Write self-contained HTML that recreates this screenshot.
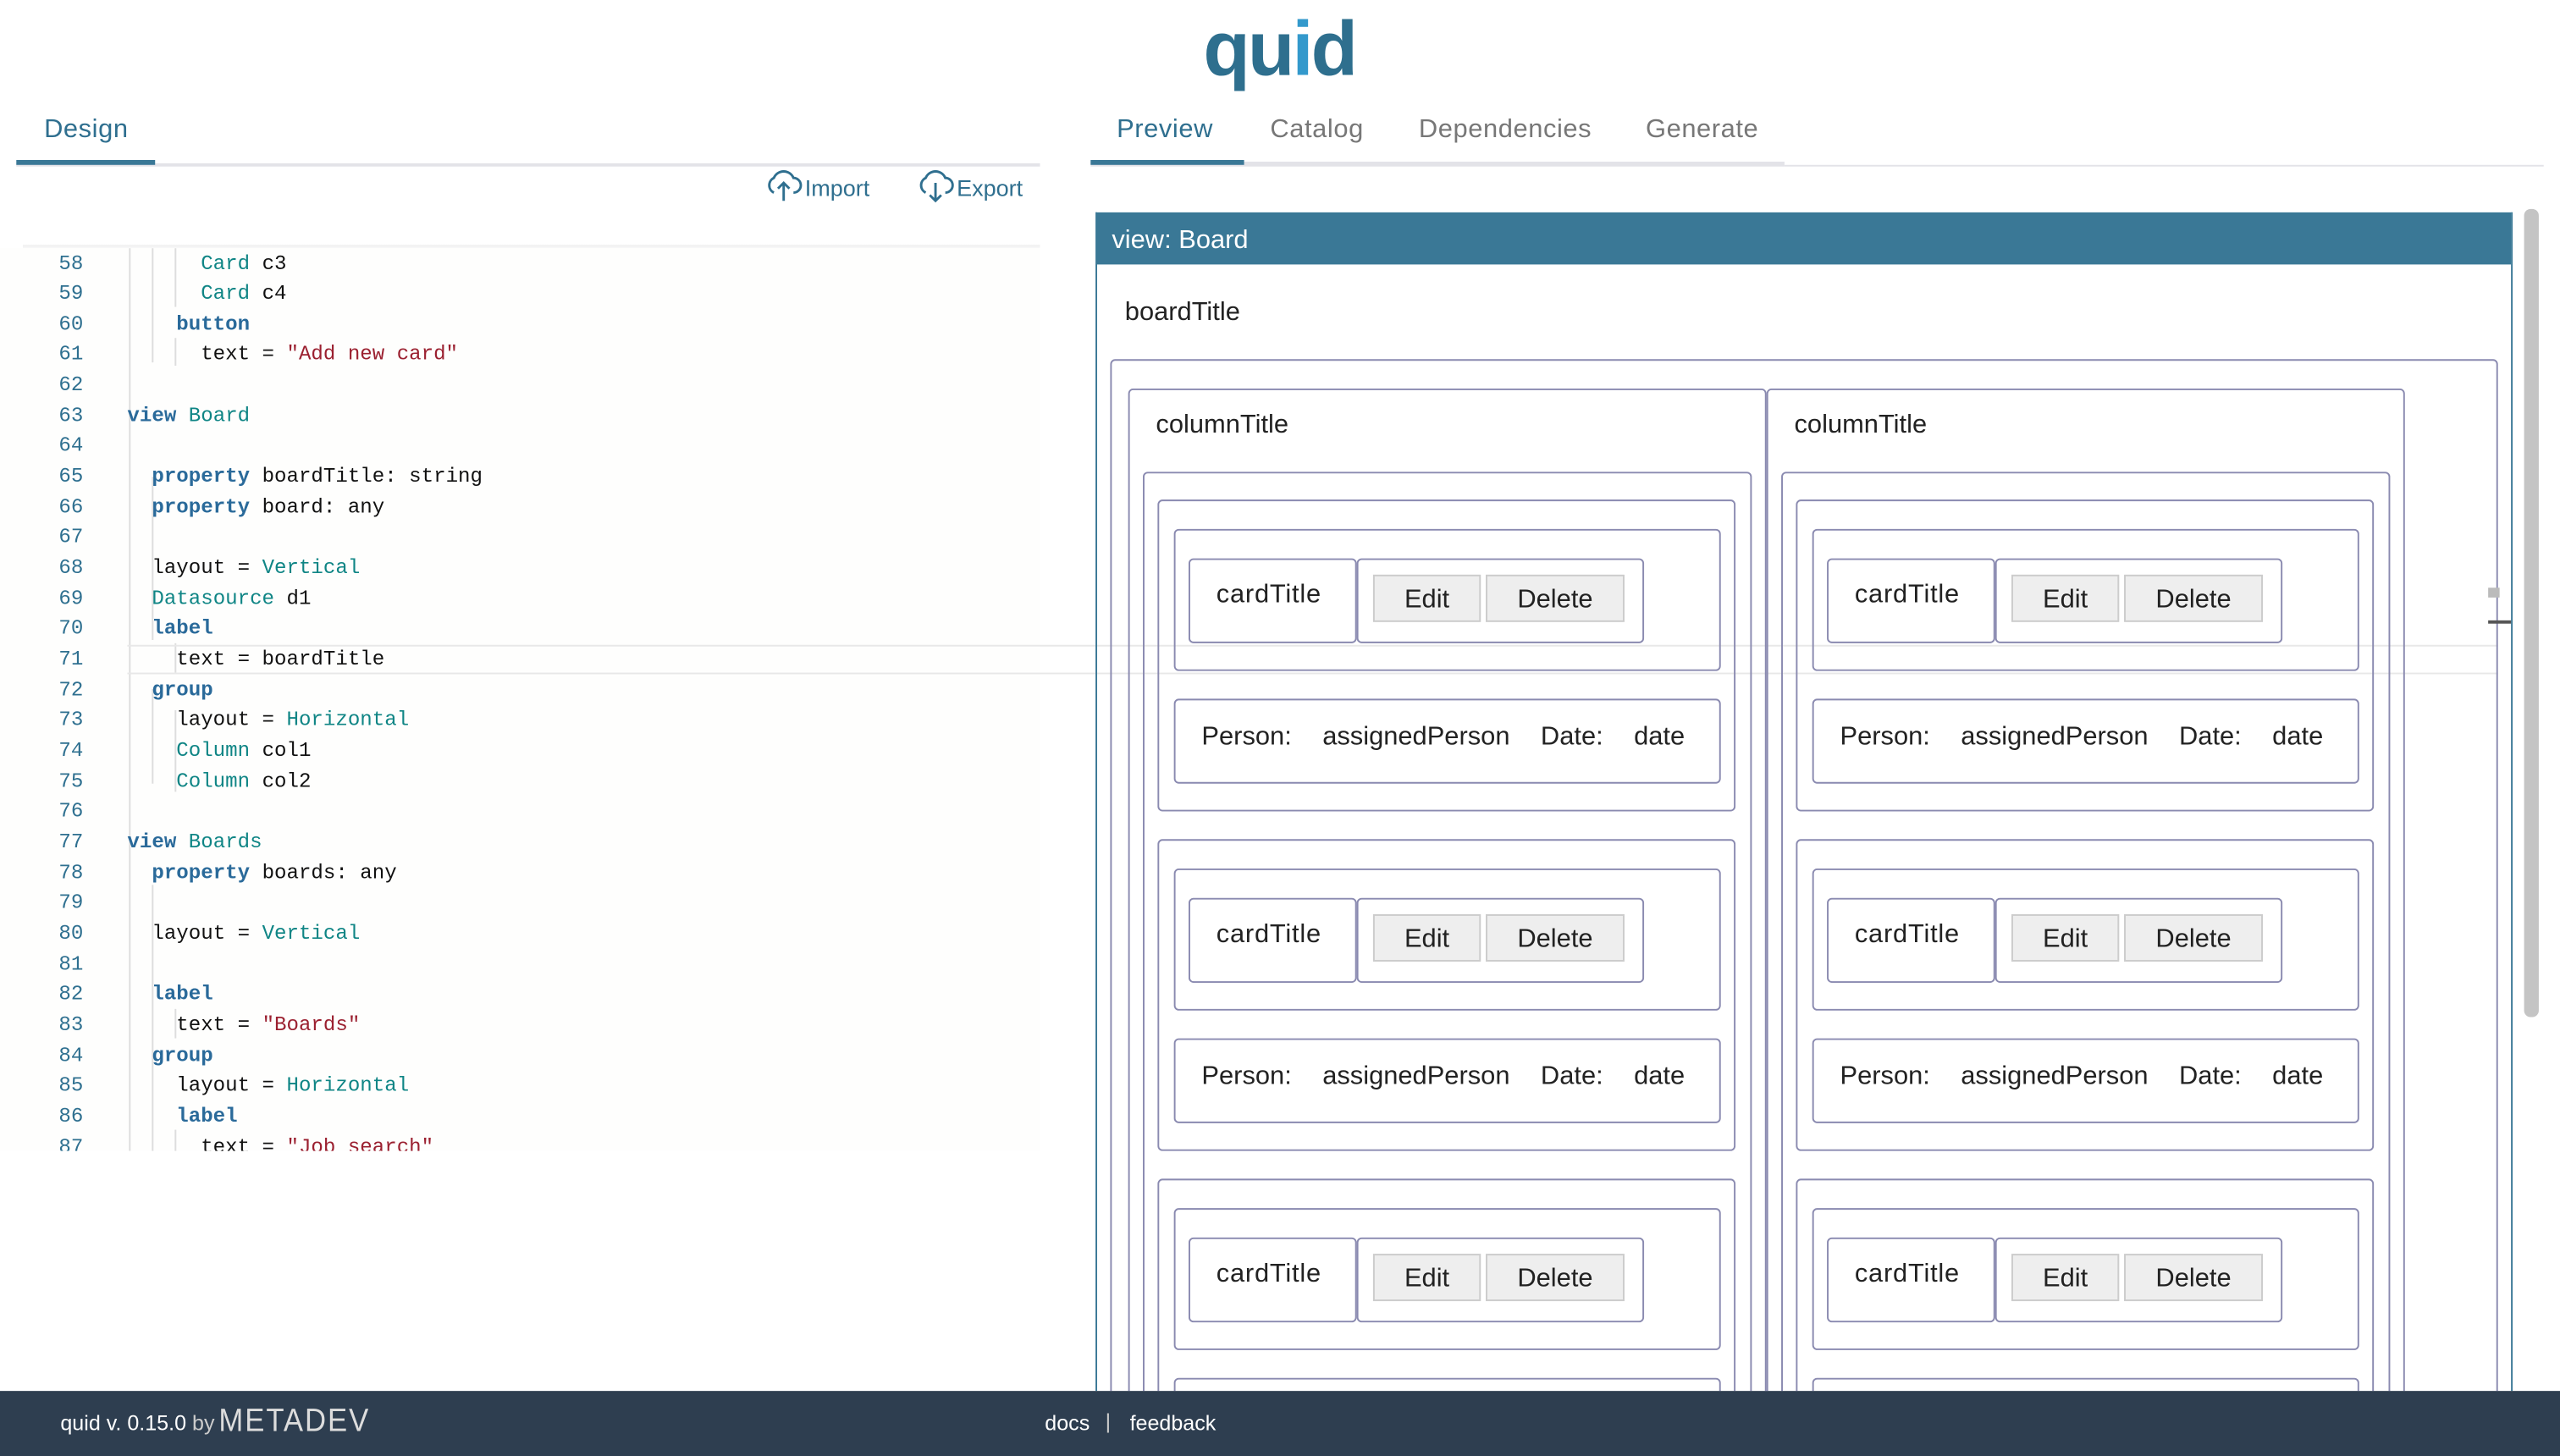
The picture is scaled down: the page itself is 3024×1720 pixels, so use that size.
<!DOCTYPE html>
<html><head><meta charset="utf-8"><style>
html,body{margin:0;padding:0;width:3024px;height:1720px;overflow:hidden;background:#fff}
#w{position:absolute;left:0;top:0;width:1568px;height:892px;overflow:hidden;transform:scale(1.92857);transform-origin:0 0;font-family:"Liberation Sans",sans-serif;color:#222}
.a{position:absolute}
.tab{position:absolute;top:71px;font-size:16px;color:#777;letter-spacing:0.3px}
.code{position:absolute;left:0;top:152px;width:637px;height:553px;overflow:hidden;font-family:"Liberation Mono",monospace;font-size:12.5px;background:#fefefd}
.ln{position:absolute;left:20px;width:31px;text-align:right;color:#2f7090}
.cl{position:absolute;white-space:pre;color:#111}
.k{color:#2a6a9a;font-weight:bold}.t{color:#0f8585}.s{color:#9b2030}
.g{position:absolute;width:1px;background:#ddd}
.b{position:absolute;border:1.3px solid #8a8ab0;border-radius:3px;box-sizing:border-box;background:transparent}
.txt{position:absolute;font-size:16px;color:#222;white-space:pre}
.btn{position:absolute;top:9px;height:29px;background:#eee;border:1px solid #ccc;box-sizing:border-box;font-size:16px;text-align:center;line-height:30px}
</style></head><body><div id="w">
<div class="a" style="left:737px;top:2px;font-size:47px;font-weight:bold;line-height:56px;letter-spacing:-1.5px;color:#2e6f8e">qu<span style="color:#3399cc">i</span>d</div>

<div class="tab" style="left:27px;color:#2f6f8f">Design</div>
<div class="a" style="left:10px;top:100px;width:627px;height:2px;background:#e3e3e8"></div>
<div class="a" style="left:10px;top:98px;width:85px;height:3px;background:#3a7896"></div>
<div class="tab" style="left:684px;color:#2f6f8f">Preview</div>
<div class="tab" style="left:778px">Catalog</div>
<div class="tab" style="left:869px">Dependencies</div>
<div class="tab" style="left:1008px">Generate</div>
<div class="a" style="left:668px;top:99px;width:425px;height:3px;background:#e3e3e8"></div>
<div class="a" style="left:1093px;top:101px;width:465px;height:1px;background:#e3e3e8"></div>
<div class="a" style="left:668px;top:98px;width:94px;height:3px;background:#3a7896"></div>

<svg class="a" style="left:468px;top:103px" width="24" height="22" viewBox="0 0 24 22"><path d="M6 15 A5 5 0 0 1 6 6 A6.5 6.5 0 0 1 18 6 A4.5 4.5 0 0 1 18 15" fill="none" stroke="#2f6f8f" stroke-width="1.5"/><path d="M12 20 V9 M8.5 12.5 L12 9 L15.5 12.5" fill="none" stroke="#2f6f8f" stroke-width="1.5"/></svg>
<div class="a" style="left:493px;top:107px;font-size:14px;color:#2f6f8f">Import</div>
<svg class="a" style="left:561px;top:103px" width="24" height="22" viewBox="0 0 24 22"><path d="M6 15 A5 5 0 0 1 6 6 A6.5 6.5 0 0 1 18 6 A4.5 4.5 0 0 1 18 15" fill="none" stroke="#2f6f8f" stroke-width="1.5"/><path d="M12 9 V20 M8.5 16.5 L12 20 L15.5 16.5" fill="none" stroke="#2f6f8f" stroke-width="1.5"/></svg>
<div class="a" style="left:586px;top:107px;font-size:14px;color:#2f6f8f">Export</div>

<div class="a" style="left:14px;top:150px;width:623px;height:3px;background:linear-gradient(#eee,#fff)"></div>
<div class="code">
<div class="g" style="left:79px;top:0;height:553px"></div>
<div class="g" style="left:93px;top:0;height:70px"></div>
<div class="g" style="left:107px;top:0;height:36px"></div>
<div class="g" style="left:107px;top:55px;height:17px"></div>
<div class="g" style="left:93px;top:140px;height:100px"></div>
<div class="g" style="left:93px;top:270px;height:58px"></div>
<div class="g" style="left:93px;top:390px;height:170px"></div>
<div class="g" style="left:107px;top:242px;height:18px"></div>
<div class="g" style="left:107px;top:466px;height:18px"></div>
<div class="g" style="left:107px;top:540px;height:18px"></div>
<div class="g" style="left:107px;top:283px;height:50px"></div>
<div id="lines"></div>
</div>
<div class="a" style="left:78px;top:395px;width:1452px;height:1px;background:#e8e8e8"></div>
<div class="a" style="left:78px;top:412px;width:1452px;height:1px;background:#e8e8e8"></div>

<div class="a" style="left:671px;top:130px;width:868px;height:722px;overflow:hidden;border-left:1px solid #3a7896;border-right:1px solid #3a7896;box-sizing:border-box">
 <div class="a" style="left:0;top:0;width:868px;height:32px;background:#3a7896;color:#fff;font-size:16px;line-height:35px;padding-left:9px;box-sizing:border-box">view: Board</div>
 <div class="txt" style="left:17px;top:53px;font-size:16px">boardTitle</div>
 <div class="b" style="left:8px;top:90px;width:850px;height:700px"></div>
 <div id="cols"></div>
</div>
<div class="a" style="left:1546px;top:128px;width:9px;height:495px;background:#c4c4c4;border-radius:4px"></div>
<div class="a" style="left:1524px;top:360px;width:7px;height:6px;background:#bbb"></div>
<div class="a" style="left:1524px;top:380px;width:14px;height:2px;background:#555"></div>

<div class="a" style="left:0;top:852px;width:1568px;height:40px;background:#2e3e50;color:#fff;font-size:13px">
 <div class="a" style="left:37px;top:12px">quid v. 0.15.0 <span style="color:#ccc">by</span></div>
 <div class="a" style="left:134px;top:8px;font-size:18px;letter-spacing:1px;color:#ddd;transform:scaleY(1.1)">METADEV</div>
 <div class="a" style="left:640px;top:12px">docs</div>
 <div class="a" style="left:677px;top:11px;color:#ccc">|</div>
 <div class="a" style="left:692px;top:12px">feedback</div>
</div>
</div>
<script>
var L=[[58,3,'<span class="t">Card</span> c3'],[59,3,'<span class="t">Card</span> c4'],[60,2,'<span class="k">button</span>'],[61,3,'text = <span class="s">"Add new card"</span>'],[62,0,''],[63,0,'<span class="k">view</span> <span class="t">Board</span>'],[64,0,''],[65,1,'<span class="k">property</span> boardTitle: string'],[66,1,'<span class="k">property</span> board: any'],[67,0,''],[68,1,'layout = <span class="t">Vertical</span>'],[69,1,'<span class="t">Datasource</span> d1'],[70,1,'<span class="k">label</span>'],[71,2,'text = boardTitle'],[72,1,'<span class="k">group</span>'],[73,2,'layout = <span class="t">Horizontal</span>'],[74,2,'<span class="t">Column</span> col1'],[75,2,'<span class="t">Column</span> col2'],[76,0,''],[77,0,'<span class="k">view</span> <span class="t">Boards</span>'],[78,1,'<span class="k">property</span> boards: any'],[79,0,''],[80,1,'layout = <span class="t">Vertical</span>'],[81,0,''],[82,1,'<span class="k">label</span>'],[83,2,'text = <span class="s">"Boards"</span>'],[84,1,'<span class="k">group</span>'],[85,2,'layout = <span class="t">Horizontal</span>'],[86,2,'<span class="k">label</span>'],[87,3,'text = <span class="s">"Job search"</span>']];
var h='';L.forEach(function(l,i){var y=2.5+i*18.66;h+='<div class="ln" style="top:'+y+'px">'+l[0]+'</div><div class="cl" style="left:'+(78+15*l[1])+'px;top:'+y+'px">'+l[2]+'</div>';});
document.getElementById('lines').innerHTML=h;
var c='';[19,410].forEach(function(x){
 c+='<div class="b" style="left:'+x+'px;top:108px;width:391px;height:700px"></div><div class="txt" style="left:'+(x+17)+'px;top:122px;font-size:16px">columnTitle</div>';
 c+='<div class="b" style="left:'+(x+9)+'px;top:159px;width:373px;height:700px"></div>';
 [176,384,592].forEach(function(y){var X=x+18;
  c+='<div class="b" style="left:'+X+'px;top:'+y+'px;width:354px;height:191px"></div>';
  c+='<div class="b" style="left:'+(X+10)+'px;top:'+(y+18)+'px;width:335px;height:87px"></div>';
  c+='<div class="b" style="left:'+(X+19)+'px;top:'+(y+36)+'px;width:103px;height:52px"><div class="txt" style="left:16px;top:13px;letter-spacing:0.4px">cardTitle</div></div>';
  c+='<div class="b" style="left:'+(X+122)+'px;top:'+(y+36)+'px;width:176px;height:52px"><div class="btn" style="left:9px;width:66px">Edit</div><div class="btn" style="left:78px;width:85px">Delete</div></div>';
  c+='<div class="b" style="left:'+(X+10)+'px;top:'+(y+122)+'px;width:335px;height:52px"><div class="txt" style="left:16px;top:14px;word-spacing:5px">Person:  assignedPerson  Date:  date</div></div>';
 });
});
document.getElementById('cols').innerHTML=c;
</script>
</body></html>
